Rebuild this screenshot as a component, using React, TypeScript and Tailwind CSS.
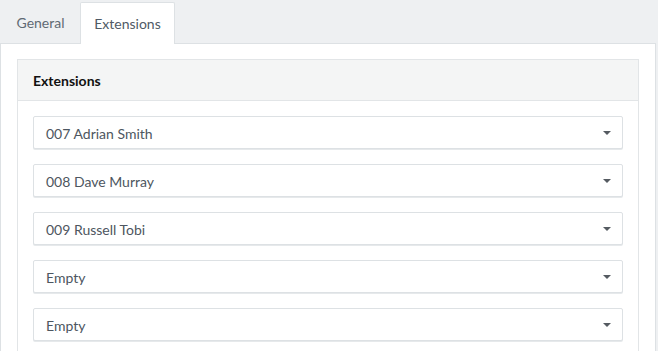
import React from "react";

const items = ["007 Adrian Smith", "008 Dave Murray", "009 Russell Tobi", "Empty", "Empty"];

function Caret() {
  return (
    <svg width="8" height="4" viewBox="0 0 8 4" className="block">
      <path d="M0 0 L8 0 L4 4 Z" fill="#555b61" />
    </svg>
  );
}

export default function App() {
  return (
    <div
      className="w-[658px] h-[351px] overflow-hidden bg-[#eef0f2] text-[14px]"
      style={{ fontFamily: "'Source Sans Pro', Lato, 'Open Sans', sans-serif" }}
    >
      <div className="flex h-[43px] items-end pl-[1px]">
        <div className="h-[41px] w-[79px] flex items-center justify-center text-[#5f6a74]">General</div>
        <div className="h-[42px] w-[95px] flex items-center justify-center bg-white border border-b-0 border-[#dde1e4] rounded-t-[2px] text-[#4f5a65] relative top-[1px]">
          Extensions
        </div>
      </div>
      <div className="w-[656px] h-[320px] bg-white border border-[#dde1e4] px-[16px] pt-[15px]">
        <div className="border border-[#e2e5e7] border-b-0 h-[300px]">
          <div className="h-[41px] bg-[#f4f5f5] border-b border-[#e2e5e7] flex items-center px-[15px] font-bold text-[#111]">
            Extensions
          </div>
          <div className="px-[15px] pt-[15px] flex flex-col gap-[15px]">
            {items.map((t, i) => (
              <div
                key={i}
                className="h-[33px] bg-white border border-[#dde1e4] rounded-[2px] shadow-[0_1px_0_#e6e9eb] flex items-center justify-between pl-[12px] pr-[11px] text-[#4d5660]"
              >
                <span className="relative top-[1px]">{t}</span>
                <Caret />
              </div>
            ))}
          </div>
        </div>
      </div>
    </div>
  );
}
